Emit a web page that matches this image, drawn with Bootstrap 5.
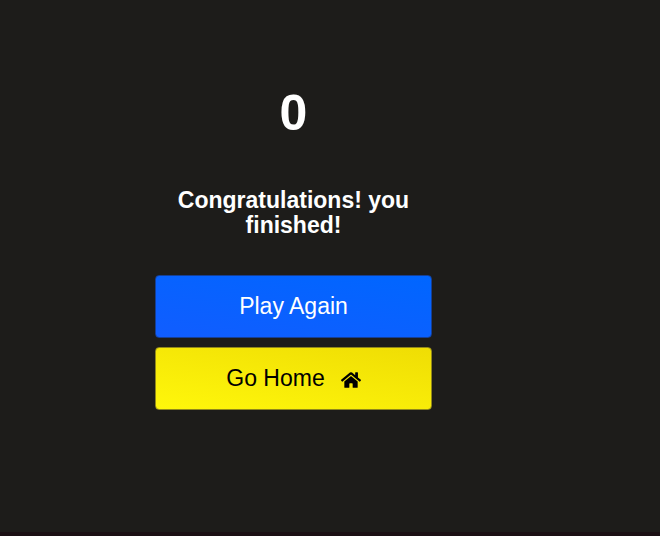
<!DOCTYPE html>
<html lang="en">
<head>
<meta charset="utf-8">
<meta name="viewport" content="width=device-width, initial-scale=1">
<title>Game over</title>
<link href="https://cdn.jsdelivr.net/npm/bootstrap@5.3.0/dist/css/bootstrap.min.css" rel="stylesheet">
<style>
body { background: #1d1c1a; color: #fff; font-family: Arial, "Liberation Sans", sans-serif; }
.end-screen { padding: 83px 73px 40px 0; }
.end-panel { width: 277px; }
.score { font-size: 50px; line-height: 60px; margin-bottom: 45px; }
.message { font-size: 23px; line-height: 25px; margin-bottom: 37px; }
.end-actions { gap: 9px; }
.end-btn { font-size: 23px; line-height: 29px; padding: 16px; border-radius: 4px; border-width: 1px; }
.end-btn-play, .end-btn-play:hover { color: #fff; background: linear-gradient(9deg, #115dff, #0066ff) border-box; border-color: #163f94; }
.end-btn-home, .end-btn-home:hover { color: #000; background: linear-gradient(9deg, #fff70b, #efdd04) border-box; border-color: #91881a; }
.home-icon { width: 20px; height: 18px; margin-top: 2px; }
.end-strip { height: 4px; background: #1b1014; }
</style>
<script src="https://cdn.jsdelivr.net/npm/bootstrap@5.3.0/dist/js/bootstrap.bundle.min.js"></script>
</head>
<body class="d-flex flex-column min-vh-100">
<main class="end-screen flex-grow-1 d-flex justify-content-center align-items-start">
  <div class="end-panel d-flex flex-column text-center">
    <h1 class="score fw-bold">0</h1>
    <h2 class="message fw-bold">Congratulations! you finished!</h2>
    <div class="d-grid end-actions">
      <button type="button" class="btn end-btn end-btn-play">Play Again</button>
      <button type="button" class="btn end-btn end-btn-home d-flex justify-content-center align-items-center gap-3">Go Home
        <svg class="home-icon" viewBox="0 0 576 512" fill="currentColor" aria-hidden="true"><path d="M280.37 148.26L96 300.11V464a16 16 0 0 0 16 16l112.06-.29a16 16 0 0 0 15.92-16V368a16 16 0 0 1 16-16h64a16 16 0 0 1 16 16v95.64a16 16 0 0 0 16 16.05L464 480a16 16 0 0 0 16-16V300L295.67 148.26a12.19 12.19 0 0 0-15.3 0zM571.6 251.47L488 182.56V44.05a12 12 0 0 0-12-12h-56a12 12 0 0 0-12 12v72.61L318.47 43a48 48 0 0 0-61 0L4.34 251.47a12 12 0 0 0-1.6 16.9l25.5 31A12 12 0 0 0 45.15 301l235.22-193.74a12.19 12.19 0 0 1 15.3 0L530.9 301a12 12 0 0 0 16.9-1.6l25.5-31a12 12 0 0 0-1.7-16.93z"/></svg>
      </button>
    </div>
  </div>
</main>
<footer class="end-strip"></footer>
</body>
</html>
